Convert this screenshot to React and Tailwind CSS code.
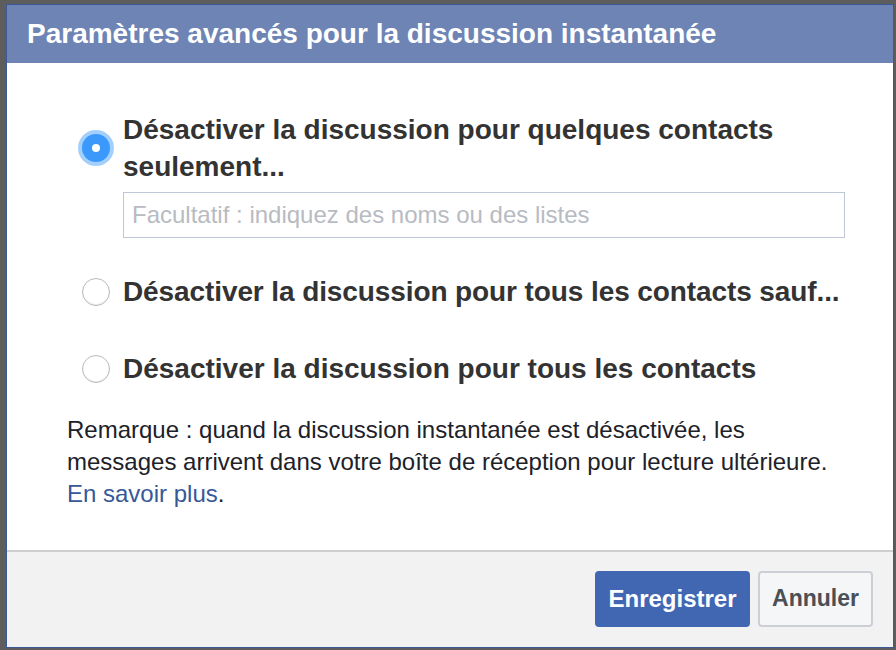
import { useState } from "react";

const options = [
  { id: "some", label: "Désactiver la discussion pour quelques contacts seulement..." },
  { id: "except", label: "Désactiver la discussion pour tous les contacts sauf..." },
  { id: "all", label: "Désactiver la discussion pour tous les contacts" },
];

const Radio = ({ checked }) => {
  if (checked) {
    return (
      <span className="flex items-center justify-center w-[36px] h-[36px] rounded-full bg-[#a3cffd] shrink-0">
        <span className="flex items-center justify-center w-[28px] h-[28px] rounded-full bg-[#3b99fc]">
          <span className="w-[8px] h-[8px] rounded-full bg-white" />
        </span>
      </span>
    );
  }
  return (
    <span className="flex items-center justify-center w-[36px] h-[36px] shrink-0">
      <span className="w-[28px] h-[28px] rounded-full bg-white border border-[#b9b9b9] shadow-[inset_0_-1px_1px_rgba(0,0,0,0.08)]" />
    </span>
  );
};

const App = () => {
  const [selected, setSelected] = useState("some");

  return (
    <div className="w-[896px] h-[650px] bg-[#5d5d5d] pt-[4px] pl-[6px] pr-[2px] overflow-hidden font-['Liberation_Sans',Arial,sans-serif]">
      <div className="flex flex-col h-[644px] border border-[#3b5998] bg-white">
        <div className="h-[58px] bg-[#6d84b4] flex items-center pl-[20px] text-white font-bold text-[28px]">
          Paramètres avancés pour la discussion instantanée
        </div>

        <div className="flex-1 pt-[48px] pl-[60px] pr-[40px]">
          {/* first option with input */}
          <div className="flex items-center gap-[9px] pl-[11px]" onClick={() => setSelected("some")}>
            <Radio checked={selected === "some"} />
            <span className="text-[28px] leading-[37px] font-bold text-[#333] w-[722px]">
              {options[0].label}
            </span>
          </div>
          <input
            className="mt-[7px] ml-[56px] w-[722px] h-[46px] border border-[#bdc7d8] px-[8px] text-[24px] text-[#1d2129] placeholder:text-[#b7bbc2] outline-none"
            placeholder="Facultatif : indiquez des noms ou des listes"
          />

          <div className="flex items-center gap-[9px] pl-[11px] mt-[35px]" onClick={() => setSelected("except")}>
            <Radio checked={selected === "except"} />
            <span className="text-[28px] leading-[37px] font-bold text-[#333] tracking-[-0.1px]">{options[1].label}</span>
          </div>

          <div className="flex items-center gap-[9px] pl-[11px] mt-[40px]" onClick={() => setSelected("all")}>
            <Radio checked={selected === "all"} />
            <span className="text-[28px] leading-[37px] font-bold text-[#333]">{options[2].label}</span>
          </div>

          <p className="mt-[27px] text-[24px] leading-[32px] text-[#1d2129]">
            Remarque : quand la discussion instantanée est désactivée, les
            <br />
            messages arrivent dans votre boîte de réception pour lecture ultérieure.
            <br />
            <a href="#" className="text-[#365899]">En savoir plus</a>.
          </p>
        </div>

        <div className="h-[97px] border-t-2 border-[#cfcfcf] bg-[#f2f2f2] flex items-center justify-end gap-[8px] pr-[20px] pb-[2px]">
          <button className="w-[155px] h-[56px] rounded-[4px] bg-[#4267b2] text-white font-bold text-[24px]">
            Enregistrer
          </button>
          <button className="w-[115px] h-[56px] rounded-[4px] bg-[#f5f6f7] border-2 border-[#ccd0d5] text-[#4b4f56] font-bold text-[23px]">
            Annuler
          </button>
        </div>
      </div>
    </div>
  );
};

export default App;
